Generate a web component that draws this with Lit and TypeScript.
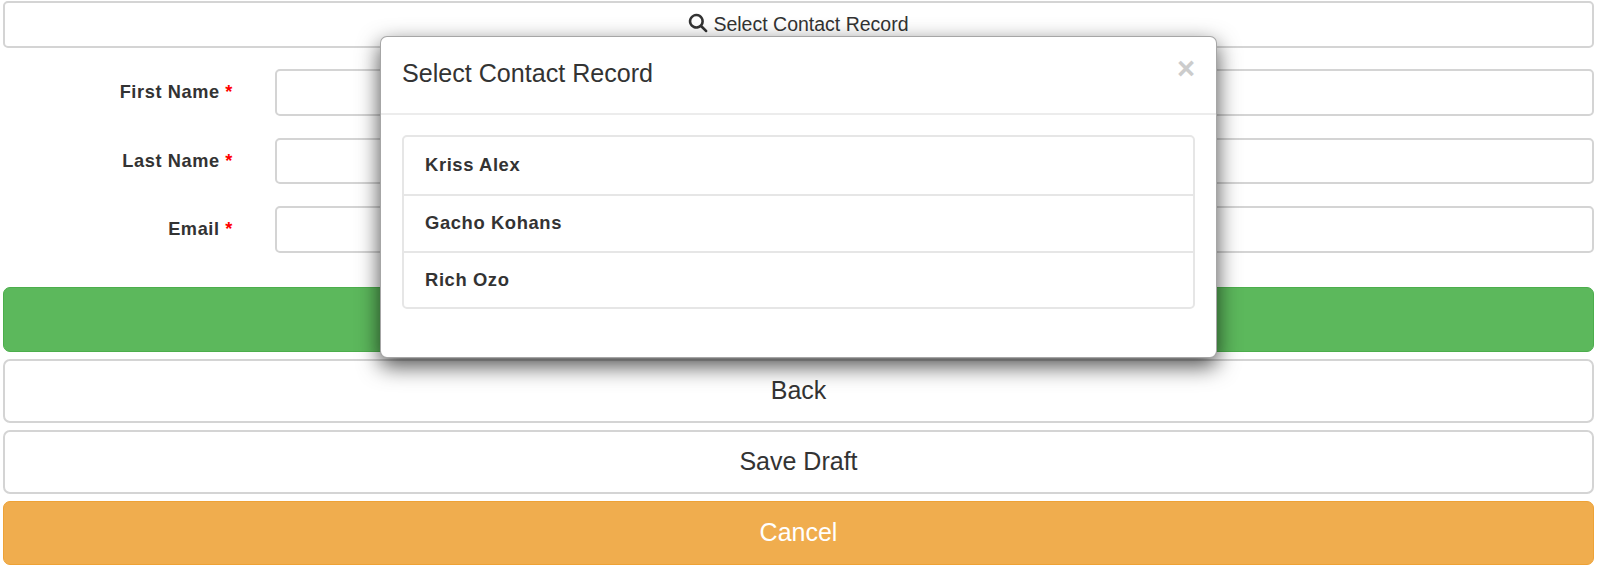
import { LitElement, html, css } from "lit";
import { customElement } from "lit/decorators.js";

const FIELDS = ["First Name", "Last Name", "Email"];
const CONTACTS = ["Kriss Alex", "Gacho Kohans", "Rich Ozo"];

@customElement("app-root")
export class AppRoot extends LitElement {
  static styles = css`
    :host {
      display: block;
      position: relative;
      height: 571px;
      overflow: hidden;
      background: #fff;
      font-family: "Liberation Sans", Arial, sans-serif;
      color: #333;
    }
    .page {
      display: flex;
      flex-direction: column;
      padding: 1px 6px 0 3px;
    }
    .btn {
      box-sizing: border-box;
      display: flex;
      align-items: center;
      justify-content: center;
      width: 100%;
      height: 64px;
      margin: 0;
      padding: 0;
      border: 2px solid #d4d4d4;
      border-radius: 7px;
      background: #fff;
      color: #333;
      font: 25px "Liberation Sans", Arial, sans-serif;
    }
    .lookup {
      height: 47px;
      gap: 5px;
      font-size: 19.5px;
      border-radius: 5px;
    }
    .lookup svg { width: 20px; height: 20px; margin-top: -4px; fill: #333; }
    .form {
      display: flex;
      flex-direction: column;
      gap: 22px;
      margin-top: 21px;
    }
    .row {
      display: grid;
      grid-template-columns: 230px 1fr;
      column-gap: 42px;
      align-items: center;
    }
    .row label {
      text-align: right;
      padding-top: 1px;
      font-weight: 700;
      font-size: 18.2px;
      letter-spacing: 0.6px;
      color: #333;
    }
    .req { color: #f00; }
    .row input {
      box-sizing: border-box;
      width: 100%;
      height: 46.5px;
      border: 2px solid #d4d4d4;
      border-radius: 5px;
      background: #fff;
    }
    .actions {
      display: flex;
      flex-direction: column;
      gap: 7px;
      margin-top: 34px;
    }
    .success { background: #5cb85c; border: 1px solid #4cae4c; height: 65px; }
    .warning { background: #f0ad4e; border: 1px solid #eea236; color: #fff; }
    .modal {
      box-sizing: border-box;
      position: absolute;
      left: 380px;
      top: 36px;
      width: 837px;
      height: 322px;
      background: #fff;
      border: 1px solid rgba(0, 0, 0, 0.35);
      border-radius: 7px;
      box-shadow: 0 8px 22px rgba(0, 0, 0, 0.7);
    }
    .modal-header {
      box-sizing: border-box;
      position: relative;
      height: 78px;
      display: flex;
      align-items: center;
      padding: 0 21px 4px 21px;
      border-bottom: 2px solid #ececec;
    }
    .modal-title { font-size: 25.1px; font-weight: 400; margin: 0; color: #333; }
    .close {
      position: absolute;
      right: 21px;
      top: 16px;
      font-size: 31px;
      line-height: 1;
      font-weight: 700;
      color: #ccc;
    }
    .modal-body { padding: 20px 21px; }
    .list {
      border: 2px solid #e6e6e6;
      border-radius: 5px;
    }
    .item {
      box-sizing: border-box;
      height: 56.75px;
      display: flex;
      align-items: center;
      padding: 0 21px;
      font-size: 18.4px;
      font-weight: 700;
      letter-spacing: 0.6px;
      color: #333;
    }
    .item + .item { border-top: 2px solid #e6e6e6; }
  `;

  render() {
    return html`
      <div class="page">
        <button class="btn lookup">
          <svg viewBox="0 0 24 24" aria-hidden="true">
            <path d="M10 1a9 9 0 1 0 5.2 16.3l5.6 5.6a1.6 1.6 0 0 0 2.2-2.2l-5.6-5.6A9 9 0 0 0 10 1zm0 3a6 6 0 1 1 0 12 6 6 0 0 1 0-12z"></path>
          </svg>
          Select Contact Record
        </button>
        <div class="form">
          ${FIELDS.map(
            (f) => html`<div class="row">
              <label>${f} <span class="req">*</span></label>
              <input type="text" />
            </div>`
          )}
        </div>
        <div class="actions">
          <button class="btn success"></button>
          <button class="btn">Back</button>
          <button class="btn">Save Draft</button>
          <button class="btn warning">Cancel</button>
        </div>
      </div>
      <div class="modal">
        <div class="modal-header">
          <h4 class="modal-title">Select Contact Record</h4>
          <span class="close">×</span>
        </div>
        <div class="modal-body">
          <div class="list">
            ${CONTACTS.map((c) => html`<div class="item">${c}</div>`)}
          </div>
        </div>
      </div>
    `;
  }
}
